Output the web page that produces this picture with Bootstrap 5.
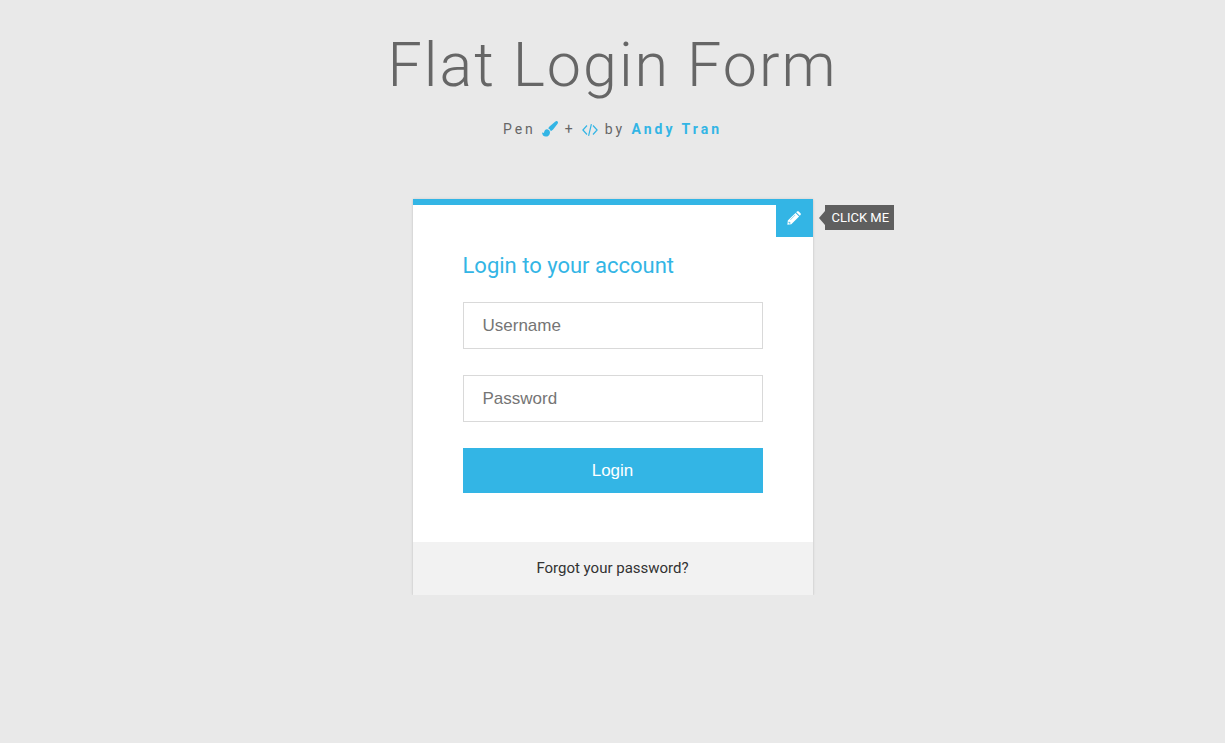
<!DOCTYPE html>
<html lang="en">
<head>
<meta charset="utf-8">
<meta name="viewport" content="width=device-width, initial-scale=1">
<title>Flat Login Form</title>
<link href="https://cdn.jsdelivr.net/npm/bootstrap@5.3.0/dist/css/bootstrap.min.css" rel="stylesheet">
<style>
  :root { --accent: #33b5e5; }
  body { background: #e9e9e9; color: #666; font-family: Roboto, "Liberation Sans", sans-serif; font-size: 15px; line-height: 20px; }
  .pen-title { padding: 31px 0 60px; font-size: 14px; letter-spacing: 3px; }
  .pen-title h1 { font-size: 61px; line-height: 68px; font-weight: 300; letter-spacing: 2px; margin-bottom: 20px; }
  .pen-title svg, .pen-title a { color: var(--accent); }
  .pen-title svg { vertical-align: -3px; }
  .login-panel { max-width: 400px; border-top: 6px solid var(--accent); box-shadow: 0 0 3px rgba(0,0,0,.1), 0 1px 2px rgba(0,0,0,.1); }
  .toggle-btn { width: 37px; height: 38px; top: -6px; right: 0; background: var(--accent); }
  .toggle-tip { left: 100%; top: 0; margin-left: 12px; padding: 0 5px 0 7px; height: 25px; line-height: 25px; font-size: 13px; font-weight: 400; background: #5f5f5f; }
  .toggle-tip::before { content: ""; position: absolute; right: 100%; top: 6px; border: 7px solid transparent; border-left: 0; border-right: 6px solid #5f5f5f; }
  .form-area { padding: 48px 50px 49px; }
  .form-area h2 { color: var(--accent); font-size: 22px; line-height: 25px; font-weight: 400; margin-bottom: 24px; }
  .form-area .form-control { height: 47px; padding: 0 19px; border: 1px solid #d9d9d9; font-family: "Liberation Sans", Arial, sans-serif; font-size: 17px; }
  .form-area .form-control::placeholder { color: #757575; }
  .login-btn { height: 45px; background: var(--accent); font-family: "Liberation Sans", Arial, sans-serif; font-size: 17px; }
  .login-fields { gap: 26px; }
  .panel-foot { background: #f2f2f2; padding: 16px 40px 17px; }
  .panel-foot a { color: #333; }
</style>
</head>
<body>
<header class="pen-title text-center">
  <h1>Flat Login Form</h1>
  <div>Pen
    <svg width="16" height="16" viewBox="0 0 16 16" fill="currentColor" aria-hidden="true"><path d="M15.500.4c.7.6.6 1.400.1 2.300L11.100 8.600c-.8.9-1.600 1.400-2.400 1.600C8.400 9 7.600 8.100 6.300 7.600c.2-.8.5-1.400 1.200-2L13.100.8c.9-.8 1.700-1 2.400-.4zM5.300 8.300c1.500.3 2.600 1.500 2.700 3.100-.1 2.700-1.900 4.200-4.200 4.200-2.400 0-3.600-1.600-3.800-4.300.9.7 1.600.9 2 .2.600-2.200 1.600-3.400 3.300-3.200z"/></svg>
    +
    <svg width="16" height="14" viewBox="0 0 16 14" fill="none" stroke="currentColor" stroke-width="1.2" aria-hidden="true"><path d="M5 2.500.9 7 5 11.500M11 2.500 15.100 7 11 11.500M9.400 1.200 6.600 12.800"/></svg>
    by <a class="fw-bold text-decoration-none" href="#">Andy Tran</a></div>
</header>
<main class="login-panel position-relative bg-white mx-auto">
  <button type="button" class="toggle-btn position-absolute border-0 p-0 d-flex align-items-center justify-content-center text-white" aria-label="Toggle form">
    <svg width="14" height="14" viewBox="0 0 14 14" fill="currentColor" aria-hidden="true"><path fill-rule="evenodd" d="M8.500 1.900 12.100 5.500 4.300 13.300 .4 13.800.8 9.600zM9.200 1.200 10 .5c.5-.5 1.200-.5 1.700 0l1.800 1.800c.5.5.5 1.200 0 1.700l-.7.800zM1.700 10.700 1.500 11.700 2.400 12.600 3.400 12.400 3.400 11.600 2.500 11.600 2.500 10.700zM8.100 3.800 3.200 8.700 3.500 9 8.400 4.100z"/></svg>
  </button>
  <div class="toggle-tip position-absolute text-white text-nowrap">CLICK ME</div>
  <section class="form-area">
    <h2>Login to your account</h2>
    <form class="login-fields d-flex flex-column">
      <input type="text" class="form-control rounded-0" placeholder="Username" aria-label="Username">
      <input type="password" class="form-control rounded-0" placeholder="Password" aria-label="Password">
      <button type="button" class="login-btn border-0 w-100 text-white">Login</button>
    </form>
  </section>
  <footer class="panel-foot text-center"><a class="text-decoration-none" href="#">Forgot your password?</a></footer>
</main>
<script src="https://cdn.jsdelivr.net/npm/bootstrap@5.3.0/dist/js/bootstrap.bundle.min.js"></script>
</body>
</html>
